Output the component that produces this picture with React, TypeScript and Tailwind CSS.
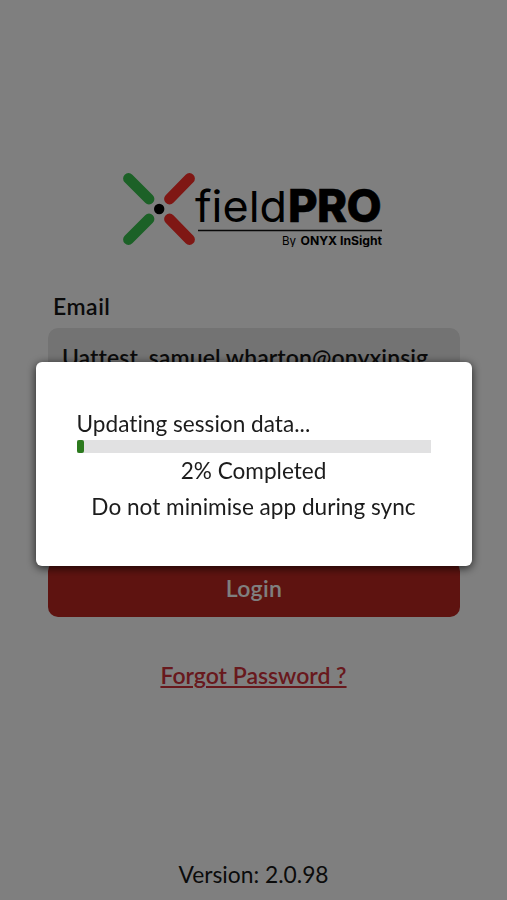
import { useState } from 'react';

function Logo() {
  return (
    <svg width="264" height="76" viewBox="0 0 264 76" role="img" aria-label="fieldPRO by ONYX InSight">
      <g strokeWidth="10.8" strokeLinecap="round">
        <path d="M7.5 7.5 L28 28 M7.5 68.5 L28 48" stroke="#38c24e" />
        <path d="M68.5 7.5 L48.5 28 M68.5 68.5 L48.5 48" stroke="#ff2e28" />
      </g>
      <circle cx="38.2" cy="38" r="5.2" />
      <text x="74" y="50.5" fontSize="43" fontWeight="400" textLength="92" lengthAdjust="spacingAndGlyphs" className="font-['Inter',sans-serif]">field</text>
      <text x="167 196 225.5" y="50.5" fontSize="45.5" fontWeight="800" stroke="#000" strokeWidth="0.6" className="font-['Inter',sans-serif]">PRO</text>
      <path d="M77 59.5 H261" stroke="#111" strokeWidth="1.5" />
      <text x="161" y="74" fontSize="12" textLength="14" lengthAdjust="spacingAndGlyphs" className="font-['Inter',sans-serif]">By</text>
      <text x="179.5" y="74" fontSize="12" fontWeight="700" textLength="81.5" lengthAdjust="spacingAndGlyphs" className="font-['Inter',sans-serif]">ONYX InSight</text>
    </svg>
  );
}

function SyncDialog({ progress }: { progress: number }) {
  return (
    <div className="fixed inset-0 flex justify-center bg-black/50 pt-[362px]">
      <div role="dialog" className="h-[204px] w-[436px] rounded-md bg-white px-[41px] pt-[48px] text-[22.6px] leading-[28px] text-[#1c1c1c] shadow-[0_2px_10px_rgba(0,0,0,0.75)]">
        <p className="tracking-[0.02px]">Updating session data...</p>
        <div className="mt-[2px] h-[13px] w-[354px] bg-[#e1e1e2]">
          <div className="h-full rounded-xs bg-[#2c7a1e]" style={{ width: `${progress}%` }} />
        </div>
        <p className="mt-[4px] text-center">{progress}% Completed</p>
        <p className="mt-[8px] text-center whitespace-nowrap">Do not minimise app during sync</p>
      </div>
    </div>
  );
}

export default function App() {
  const [email, setEmail] = useState('Uattest_samuel.wharton@onyxinsig');

  return (
    <div className="flex h-screen flex-col overflow-hidden bg-white px-12 pt-[171px] font-['Lato',sans-serif] text-[#161616] [font-variant-ligatures:none]">
      <div className="flex justify-center pr-[1px]">
        <Logo />
      </div>

      <label htmlFor="email" className="mt-[45px] ml-[5px] text-[23px] leading-[28px] font-semibold tracking-[0.5px]">Email</label>
      <input
        id="email"
        value={email}
        onChange={e => setEmail(e.target.value)}
        className="mt-[8px] h-[58px] w-[412px] shrink-0 rounded-[10px] bg-[#e6e6e6] px-[14px] text-[23px] font-semibold tracking-[0.1px] outline-none"
      />

      <button className="mt-[175px] h-[56px] w-[412px] shrink-0 rounded-[10px] bg-[#bd2721] pb-[2px] text-[23px] font-semibold tracking-[0.3px] text-white">
        Login
      </button>
      <a href="#" className="mt-[44px] self-center text-[23px] leading-[28px] font-semibold text-[#d0323a] underline decoration-2 underline-offset-2">
        Forgot Password ?
      </a>
      <p className="mt-auto mb-[12px] text-center text-[22.8px] leading-[28px]">Version: 2.0.98</p>

      <SyncDialog progress={2} />
    </div>
  );
}
